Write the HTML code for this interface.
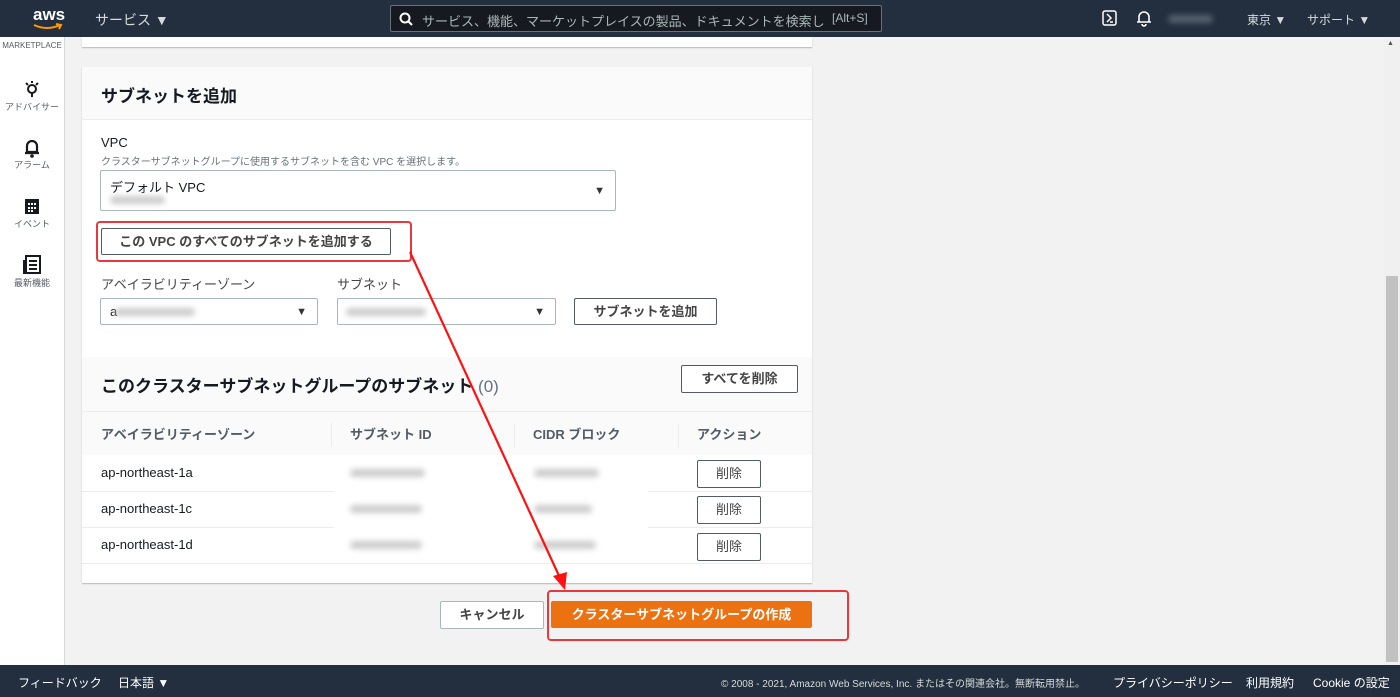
<!DOCTYPE html><html><head><meta charset="utf-8"><style>
*{box-sizing:border-box;margin:0;padding:0}
body{width:1400px;height:697px;overflow:hidden;background:#f2f2f2;font-family:"Liberation Sans","Noto Sans CJK JP",sans-serif;color:#16191f;position:relative;font-size:14px}
.abs{position:absolute}
.hdr{left:0;top:0;width:1400px;height:37px;background:#232f3e;color:#d5dbdb}
.side{left:0;top:37px;width:65px;height:628px;background:#fff;border-right:1px solid #d5dbdb}
.side div{position:absolute;width:64px;text-align:center;font-size:9px;color:#545b64}
.card{background:#fff;box-shadow:0 1px 1px rgba(0,0,0,.25)}
.btn{position:absolute;border:1px solid #545b64;background:#fff;border-radius:2px;font-weight:bold;font-size:13px;color:#545b64;text-align:center}
.sel{position:absolute;border:1px solid #aab7b8;background:#fff;border-radius:2px}
.sel:after{content:"▼";position:absolute;right:10px;top:50%;transform:translateY(-50%);font-size:11px;color:#333}
.blur{position:absolute;background:#ccc;filter:blur(3px);height:8px;border-radius:4px}
.ft{left:0;top:665px;width:1400px;height:32px;background:#232f3e;color:#fff;font-size:12px}
</style></head><body>
<div class="abs hdr">
 <div class="abs" style="left:33px;top:5px;color:#fff;font-size:17px;font-weight:bold">aws</div>
 <svg class="abs" style="left:32px;top:23px" width="32" height="8"><path d="M2 2 Q15 8 28 2 M24 1 L29 2 L27 6" stroke="#f90" stroke-width="2" fill="none"/></svg>
 <div class="abs" style="left:95px;top:10px;font-size:14px">サービス ▼</div>
 <div class="abs" style="left:390px;top:5px;width:492px;height:27px;border:1px solid #687078;background:#16191f;border-radius:2px"></div>
 <div class="abs" style="left:422px;top:11px;width:404px;font-size:13px;color:#aab7b8;white-space:nowrap;overflow:hidden">サービス、機能、マーケットプレイスの製品、ドキュメントを検索しま</div>
 <div class="abs" style="left:832px;top:11px;font-size:12px;color:#aab7b8">[Alt+S]</div>
 <svg class="abs" style="left:399px;top:12px" width="14" height="14"><circle cx="6" cy="6" r="4.5" stroke="#fff" stroke-width="2" fill="none"/><path d="M9 9 L13 13" stroke="#fff" stroke-width="2"/></svg>
 <svg class="abs" style="left:1102px;top:10px" width="16" height="16"><rect x="1" y="1" width="13" height="14" rx="2" stroke="#fff" stroke-width="1.5" fill="none"/><path d="M5 4 L9 8 L5 12 M8 12 H11" stroke="#fff" stroke-width="1.5" fill="none"/></svg>
 <svg class="abs" style="left:1136px;top:10px" width="16" height="17"><path d="M3 12 V7 A5 5 0 0 1 13 7 V12 Z M1 12 H15 M6 14 A2 2 0 0 0 10 14" stroke="#fff" stroke-width="1.6" fill="none"/></svg>
 <div class="blur" style="left:1168px;top:15px;width:45px;background:#56616e"></div>
 <div class="abs" style="left:1247px;top:11px;font-size:12px">東京 ▼</div>
 <div class="abs" style="left:1307px;top:11px;font-size:12px">サポート ▼</div>
</div>
<div class="abs side">
 <div style="top:4px;font-size:8px">MARKETPLACE</div>
 <svg class="abs" style="left:24px;top:43px" width="16" height="20"><circle cx="8" cy="9" r="4" stroke="#16191f" stroke-width="2" fill="none"/><path d="M8 13 V17 M2 3 L4 5 M14 3 L12 5 M8 1 V3" stroke="#16191f" stroke-width="2"/></svg>
 <div style="top:63px">アドバイサー</div>
 <svg class="abs" style="left:23px;top:101px" width="18" height="20"><path d="M4 14 V8 A5 5 0 0 1 14 8 V14 Z M2 15 H16" stroke="#16191f" stroke-width="2.2" fill="none"/><circle cx="9" cy="18" r="1.8" fill="#16191f"/></svg>
 <div style="top:121px">アラーム</div>
 <svg class="abs" style="left:24px;top:161px" width="16" height="17"><rect x="1" y="1" width="14" height="15" fill="#16191f"/><path d="M4 5h2v2H4zM7 5h2v2H7zM10 5h2v2h-2zM4 9h2v2H4zM7 9h2v2H7zM10 9h2v2h-2zM4 12h2v2H4zM7 12h2v2H7z" fill="#fff"/></svg>
 <div style="top:180px">イベント</div>
 <svg class="abs" style="left:23px;top:218px" width="18" height="19"><rect x="3" y="1" width="14" height="17" stroke="#16191f" stroke-width="2" fill="none"/><path d="M1 5 V18 H4 M6 6 H14 M6 10 H14 M6 14 H14" stroke="#16191f" stroke-width="2" fill="none"/></svg>
 <div style="top:239px">最新機能</div>
</div>
<div class="abs card" style="left:82px;top:37px;width:730px;height:10px"></div>
<div class="abs card" style="left:82px;top:67px;width:730px;height:516px">
 <div class="abs" style="left:0;top:0;width:730px;height:53px;background:#fafafa;border-bottom:1px solid #eaeded"></div>
 <div class="abs" style="left:19px;top:15px;font-size:17px;font-weight:bold">サブネットを追加</div>
 <div class="abs" style="left:19px;top:68px;font-size:13px">VPC</div>
 <div class="abs" style="left:19px;top:86px;font-size:10px;color:#687078">クラスターサブネットグループに使用するサブネットを含む VPC を選択します。</div>
 <div class="sel" style="left:18px;top:103px;width:516px;height:41px"><div class="abs" style="left:9px;top:6px;font-size:13px">デフォルト VPC</div><div class="blur" style="left:9px;top:25px;width:55px"></div></div>
 <div class="btn" style="left:19px;top:161px;width:290px;height:27px;line-height:25px;color:#444">この VPC のすべてのサブネットを追加する</div>
 <div class="abs" style="left:19px;top:207px;font-size:13px;color:#444">アベイラビリティーゾーン</div>
 <div class="abs" style="left:255px;top:207px;font-size:13px;color:#444">サブネット</div>
 <div class="sel" style="left:18px;top:231px;width:218px;height:27px"><div class="abs" style="left:9px;top:5px;font-size:13px">a</div><div class="blur" style="left:14px;top:9px;width:80px"></div></div>
 <div class="sel" style="left:255px;top:231px;width:219px;height:27px"><div class="blur" style="left:8px;top:9px;width:80px"></div></div>
 <div class="btn" style="left:492px;top:231px;width:143px;height:27px;line-height:25px;color:#444">サブネットを追加</div>
 <div class="abs" style="left:0;top:290px;width:730px;height:54px;background:#fafafa"></div>
 <div class="abs" style="left:19px;top:305px;font-size:17px;font-weight:bold">このクラスターサブネットグループのサブネット <span style="font-weight:normal;color:#687078">(0)</span></div>
 <div class="btn" style="left:599px;top:298px;width:117px;height:28px;line-height:26px;color:#444">すべてを削除</div>
 <div class="abs" style="left:0;top:344px;width:730px;height:44px;background:#fafafa;border-top:1px solid #eaeded"></div>
 <div class="abs" style="left:19px;top:357px;font-size:13px;font-weight:bold;color:#545b64">アベイラビリティーゾーン</div>
 <div class="abs" style="left:249px;top:356px;width:1px;height:24px;background:#eaeded"></div>
 <div class="abs" style="left:268px;top:357px;font-size:13px;font-weight:bold;color:#545b64">サブネット ID</div>
 <div class="abs" style="left:432px;top:356px;width:1px;height:24px;background:#eaeded"></div>
 <div class="abs" style="left:451px;top:357px;font-size:13px;font-weight:bold;color:#545b64">CIDR ブロック</div>
 <div class="abs" style="left:596px;top:356px;width:1px;height:24px;background:#eaeded"></div>
 <div class="abs" style="left:615px;top:357px;font-size:13px;font-weight:bold;color:#545b64">アクション</div>
 <div class="abs" style="left:0;top:424px;width:730px;height:1px;background:#eaeded"></div>
 <div class="abs" style="left:0;top:460px;width:730px;height:1px;background:#eaeded"></div>
 <div class="abs" style="left:0;top:496px;width:730px;height:1px;background:#eaeded"></div>
 <div class="abs" style="left:252px;top:388px;width:314px;height:108px;background:#fff"></div>
 <div class="abs" style="left:19px;top:398px;font-size:13px">ap-northeast-1a</div>
 <div class="abs" style="left:19px;top:434px;font-size:13px">ap-northeast-1c</div>
 <div class="abs" style="left:19px;top:470px;font-size:13px">ap-northeast-1d</div>
 <div class="blur" style="left:268px;top:402px;width:75px"></div><div class="blur" style="left:268px;top:438px;width:72px"></div><div class="blur" style="left:268px;top:474px;width:72px"></div>
 <div class="blur" style="left:452px;top:402px;width:65px"></div><div class="blur" style="left:452px;top:438px;width:58px"></div><div class="blur" style="left:452px;top:474px;width:62px"></div>
 <div class="btn" style="left:615px;top:393px;width:64px;height:28px;line-height:26px;font-weight:normal;color:#444">削除</div>
 <div class="btn" style="left:615px;top:429px;width:64px;height:28px;line-height:26px;font-weight:normal;color:#444">削除</div>
 <div class="btn" style="left:615px;top:466px;width:64px;height:28px;line-height:26px;font-weight:normal;color:#444">削除</div>
</div>
<div class="btn" style="left:440px;top:601px;width:104px;height:28px;line-height:26px;color:#444;border-color:#aab7b8">キャンセル</div>
<div class="abs" style="left:551px;top:601px;width:261px;height:27px;background:#ec7211;color:#fff;font-weight:bold;font-size:13px;text-align:center;line-height:27px;border-radius:2px">クラスターサブネットグループの作成</div>
<div class="abs" style="left:96px;top:221px;width:316px;height:41px;border:2px solid #e8383d;border-radius:4px"></div>
<div class="abs" style="left:547px;top:590px;width:302px;height:51px;border:2px solid #e8383d;border-radius:4px"></div>
<svg class="abs" style="left:0;top:0" width="1400" height="697"><path d="M410 252 L560 578" stroke="#f11" stroke-width="2.2"/><path d="M553 576 L565 590 L567 572 Z" fill="#f11"/></svg>
<div class="abs" style="left:1384px;top:37px;width:16px;height:628px;background:#f0f0f0"></div>
<div class="abs" style="left:1386px;top:276px;width:12px;height:386px;background:#c1c1c1"></div>
<div class="abs" style="left:1387px;top:40px;font-size:7px;color:#555">▲</div>
<div class="abs ft">
 <div class="abs" style="left:18px;top:9px;font-size:12px">フィードバック</div>
 <div class="abs" style="left:118px;top:9px;font-size:12px">日本語 ▼</div>
 <div class="abs" style="left:721px;top:10px;font-size:10px;color:#d5dbdb">© 2008 - 2021, Amazon Web Services, Inc. またはその関連会社。無断転用禁止。</div>
 <div class="abs" style="left:1113px;top:9px">プライバシーポリシー</div>
 <div class="abs" style="left:1246px;top:9px">利用規約</div>
 <div class="abs" style="left:1313px;top:9px">Cookie の設定</div>
</div>
</body></html>
